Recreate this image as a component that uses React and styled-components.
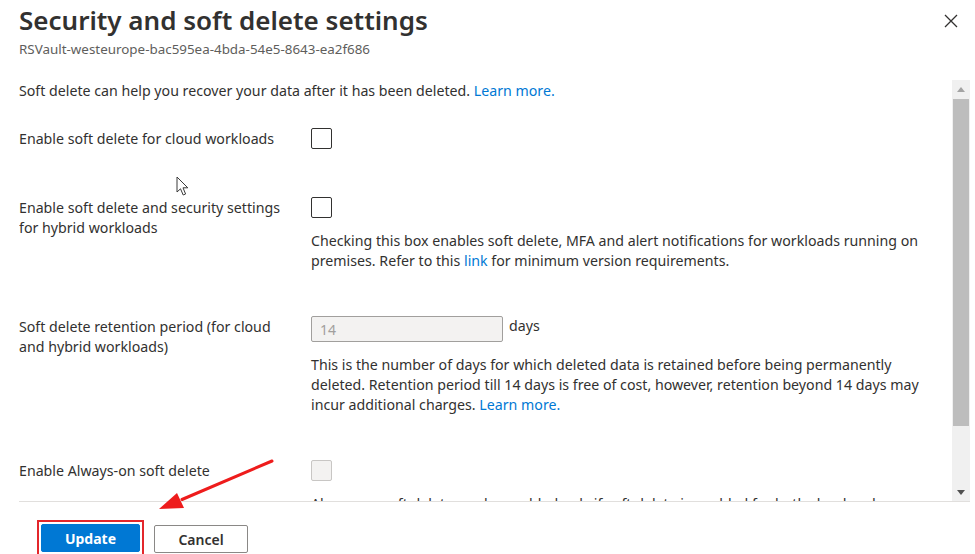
import React from 'react'
import styled, { createGlobalStyle } from 'styled-components'

const GlobalStyle = createGlobalStyle`
  html, body {
    margin: 0;
    padding: 0;
    background: #fff;
    overflow: hidden;
  }
  body {
    font-family: "Noto Sans", "Open Sans", sans-serif;
    color: #323130;
  }
`

export default function App() {
  return (
    <Page>
      <GlobalStyle />
      <Header>
        <TitleBlock>
          <Title>Security and soft delete settings</Title>
          <Subtitle>RSVault-westeurope-bac595ea-4bda-54e5-8643-ea2f686</Subtitle>
        </TitleBlock>
        <CloseButton aria-label="Close">
          <svg width="14" height="14" viewBox="0 0 14 14">
            <path d="M1 1 L13 13 M13 1 L1 13" stroke="#323130" strokeWidth="1.3" fill="none" />
          </svg>
        </CloseButton>
      </Header>

      <ScrollArea>
        <Content>
          <Intro>
            Soft delete can help you recover your data after it has been deleted. <Link>Learn more.</Link>
          </Intro>

          <Row>
            <Label>Enable soft delete for cloud workloads</Label>
            <Control>
              <Checkbox />
            </Control>
          </Row>

          <Row>
            <Label>Enable soft delete and security settings for hybrid workloads</Label>
            <Control>
              <Checkbox />
              <Description>
                Checking this box enables soft delete, MFA and alert notifications for workloads running on
                <br />
                premises. Refer to this <Link>link</Link> for minimum version requirements.
              </Description>
            </Control>
          </Row>

          <Row>
            <Label>Soft delete retention period (for cloud and hybrid workloads)</Label>
            <Control>
              <InputLine>
                <NumberInput value="14" disabled readOnly />
                <Unit>days</Unit>
              </InputLine>
              <Description>
                This is the number of days for which deleted data is retained before being permanently
                <br />
                deleted. Retention period till 14 days is free of cost, however, retention beyond 14 days may
                <br />
                incur additional charges. <Link>Learn more.</Link>
              </Description>
            </Control>
          </Row>

          <Row>
            <Label>Enable Always-on soft delete</Label>
            <Control>
              <Checkbox $disabled />
              <Description>
                Always-on soft delete can be enabled only if soft delete is enabled for both cloud and
                <br />
                hybrid workloads.
              </Description>
            </Control>
          </Row>
        </Content>

        <Scrollbar>
          <ScrollArrow>
            <svg width="8" height="5" viewBox="0 0 8 5"><path d="M0 5 L4 0 L8 5 Z" fill="#a3a3a3" /></svg>
          </ScrollArrow>
          <Thumb />
          <Track />
          <ScrollArrow>
            <svg width="8" height="5" viewBox="0 0 8 5"><path d="M0 0 L8 0 L4 5 Z" fill="#505050" /></svg>
          </ScrollArrow>
        </Scrollbar>
      </ScrollArea>

      <Footer>
        <Highlight>
          <PrimaryButton>Update</PrimaryButton>
        </Highlight>
        <DefaultButton>Cancel</DefaultButton>
      </Footer>

      <Cursor width="14" height="22" viewBox="0 0 14 22">
        <path d="M1 1 L1 16 L4.5 12.8 L7.2 19 L9.6 18 L7 11.8 L11.8 11.8 Z" fill="#fff" stroke="#3a3a3a" strokeWidth="1" strokeLinejoin="round" />
      </Cursor>

      <PointerArrow width="130" height="70" viewBox="0 0 130 70">
        <line x1="122" y1="11" x2="32" y2="49.5" stroke="#ee1c1c" strokeWidth="3" strokeLinecap="round" />
        <path d="M9 59 L27 43 L34 58 Z" fill="#ee1c1c" />
      </PointerArrow>
    </Page>
  )
}

const Page = styled.div`
  position: relative;
  width: 975px;
  height: 554px;
  overflow: hidden;
  background: #fff;
`

const Header = styled.header`
  display: flex;
  justify-content: space-between;
  align-items: flex-start;
  height: 80px;
  padding: 0 17px 0 19px;
  box-sizing: border-box;
`

const TitleBlock = styled.div`
  display: flex;
  flex-direction: column;
`

const Title = styled.h1`
  margin: 0;
  font-size: 26px;
  line-height: 40px;
  font-weight: 600;
  color: #323130;
`

const Subtitle = styled.div`
  font-size: 13.4px;
  line-height: 18px;
  color: #605e5c;
`

const CloseButton = styled.button`
  margin-top: 14px;
  padding: 0;
  border: none;
  background: transparent;
  width: 14px;
  height: 14px;
  display: flex;
`

const ScrollArea = styled.div`
  display: flex;
  height: 421px;
  margin: 0 5px 0 19px;
  border-bottom: 1px solid #e1dfdd;
`

const Content = styled.div`
  flex: 1;
  overflow: hidden;
  display: flex;
  flex-direction: column;
  gap: 45px;
  font-size: 14.2px;
  line-height: 20px;

  & > * {
    flex-shrink: 0;
  }
`

const Intro = styled.p`
  margin: 0 0 -18px;
  padding-top: 1px;
  white-space: nowrap;
`

const Link = styled.a`
  color: #0078d4;
  cursor: pointer;
`

const Row = styled.div`
  display: grid;
  grid-template-columns: 292px 1fr;
  min-height: 24px;
`

const Label = styled.div`
  padding: 1px 20px 0 0;
  line-height: 20px;
`

const Control = styled.div`
  display: flex;
  flex-direction: column;
  align-items: flex-start;
`

const Checkbox = styled.span`
  display: block;
  box-sizing: border-box;
  width: 21px;
  height: 21px;
  border-radius: 2px;
  border: 1px solid ${p => (p.$disabled ? '#c8c6c4' : '#323130')};
  background: ${p => (p.$disabled ? '#f3f2f1' : '#fff')};
`

const Description = styled.p`
  margin: 13px 0 0;
  line-height: 20px;
  white-space: nowrap;
`

const InputLine = styled.div`
  display: flex;
  align-items: flex-start;
  gap: 6px;
`

const NumberInput = styled.input`
  width: 192px;
  height: 26px;
  box-sizing: border-box;
  border: 1px solid #a19f9d;
  border-radius: 2px;
  background: #f3f2f1;
  color: #a19f9d;
  font: inherit;
  font-size: 14px;
  padding: 0 8px;
  margin: 0;
`

const Unit = styled.span`
  line-height: 20px;
`

const Scrollbar = styled.div`
  width: 18px;
  display: flex;
  flex-direction: column;
  background: #f0f0f0;
`

const ScrollArrow = styled.div`
  height: 18px;
  display: flex;
  align-items: center;
  justify-content: center;
`

const Thumb = styled.div`
  height: 327px;
  margin: 1px 1px 0;
  background: #bdbdbd;
`

const Track = styled.div`
  flex: 1;
`

const Footer = styled.footer`
  display: flex;
  align-items: flex-start;
  gap: 10px;
  padding: 18px 0 0 37px;
`

const Highlight = styled.div`
  border: 2px solid #e3262b;
  padding: 2px;
  display: flex;
`

const BaseButton = styled.button`
  height: 28px;
  box-sizing: border-box;
  border-radius: 2px;
  font-family: "Noto Sans", "Open Sans", sans-serif;
  font-size: 14px;
  font-weight: 600;
  padding: 0 16px;
  cursor: pointer;
`

const PrimaryButton = styled(BaseButton)`
  width: 99px;
  background: #0078d4;
  border: 1px solid #0078d4;
  color: #fff;
  font-weight: 700;
`

const DefaultButton = styled(BaseButton)`
  width: 94px;
  margin-top: 5px;
  background: #fff;
  border: 1px solid #8a8886;
  color: #323130;
`

const Cursor = styled.svg`
  position: absolute;
  left: 176px;
  top: 176px;
`

const PointerArrow = styled.svg`
  position: absolute;
  left: 150px;
  top: 450px;
`
